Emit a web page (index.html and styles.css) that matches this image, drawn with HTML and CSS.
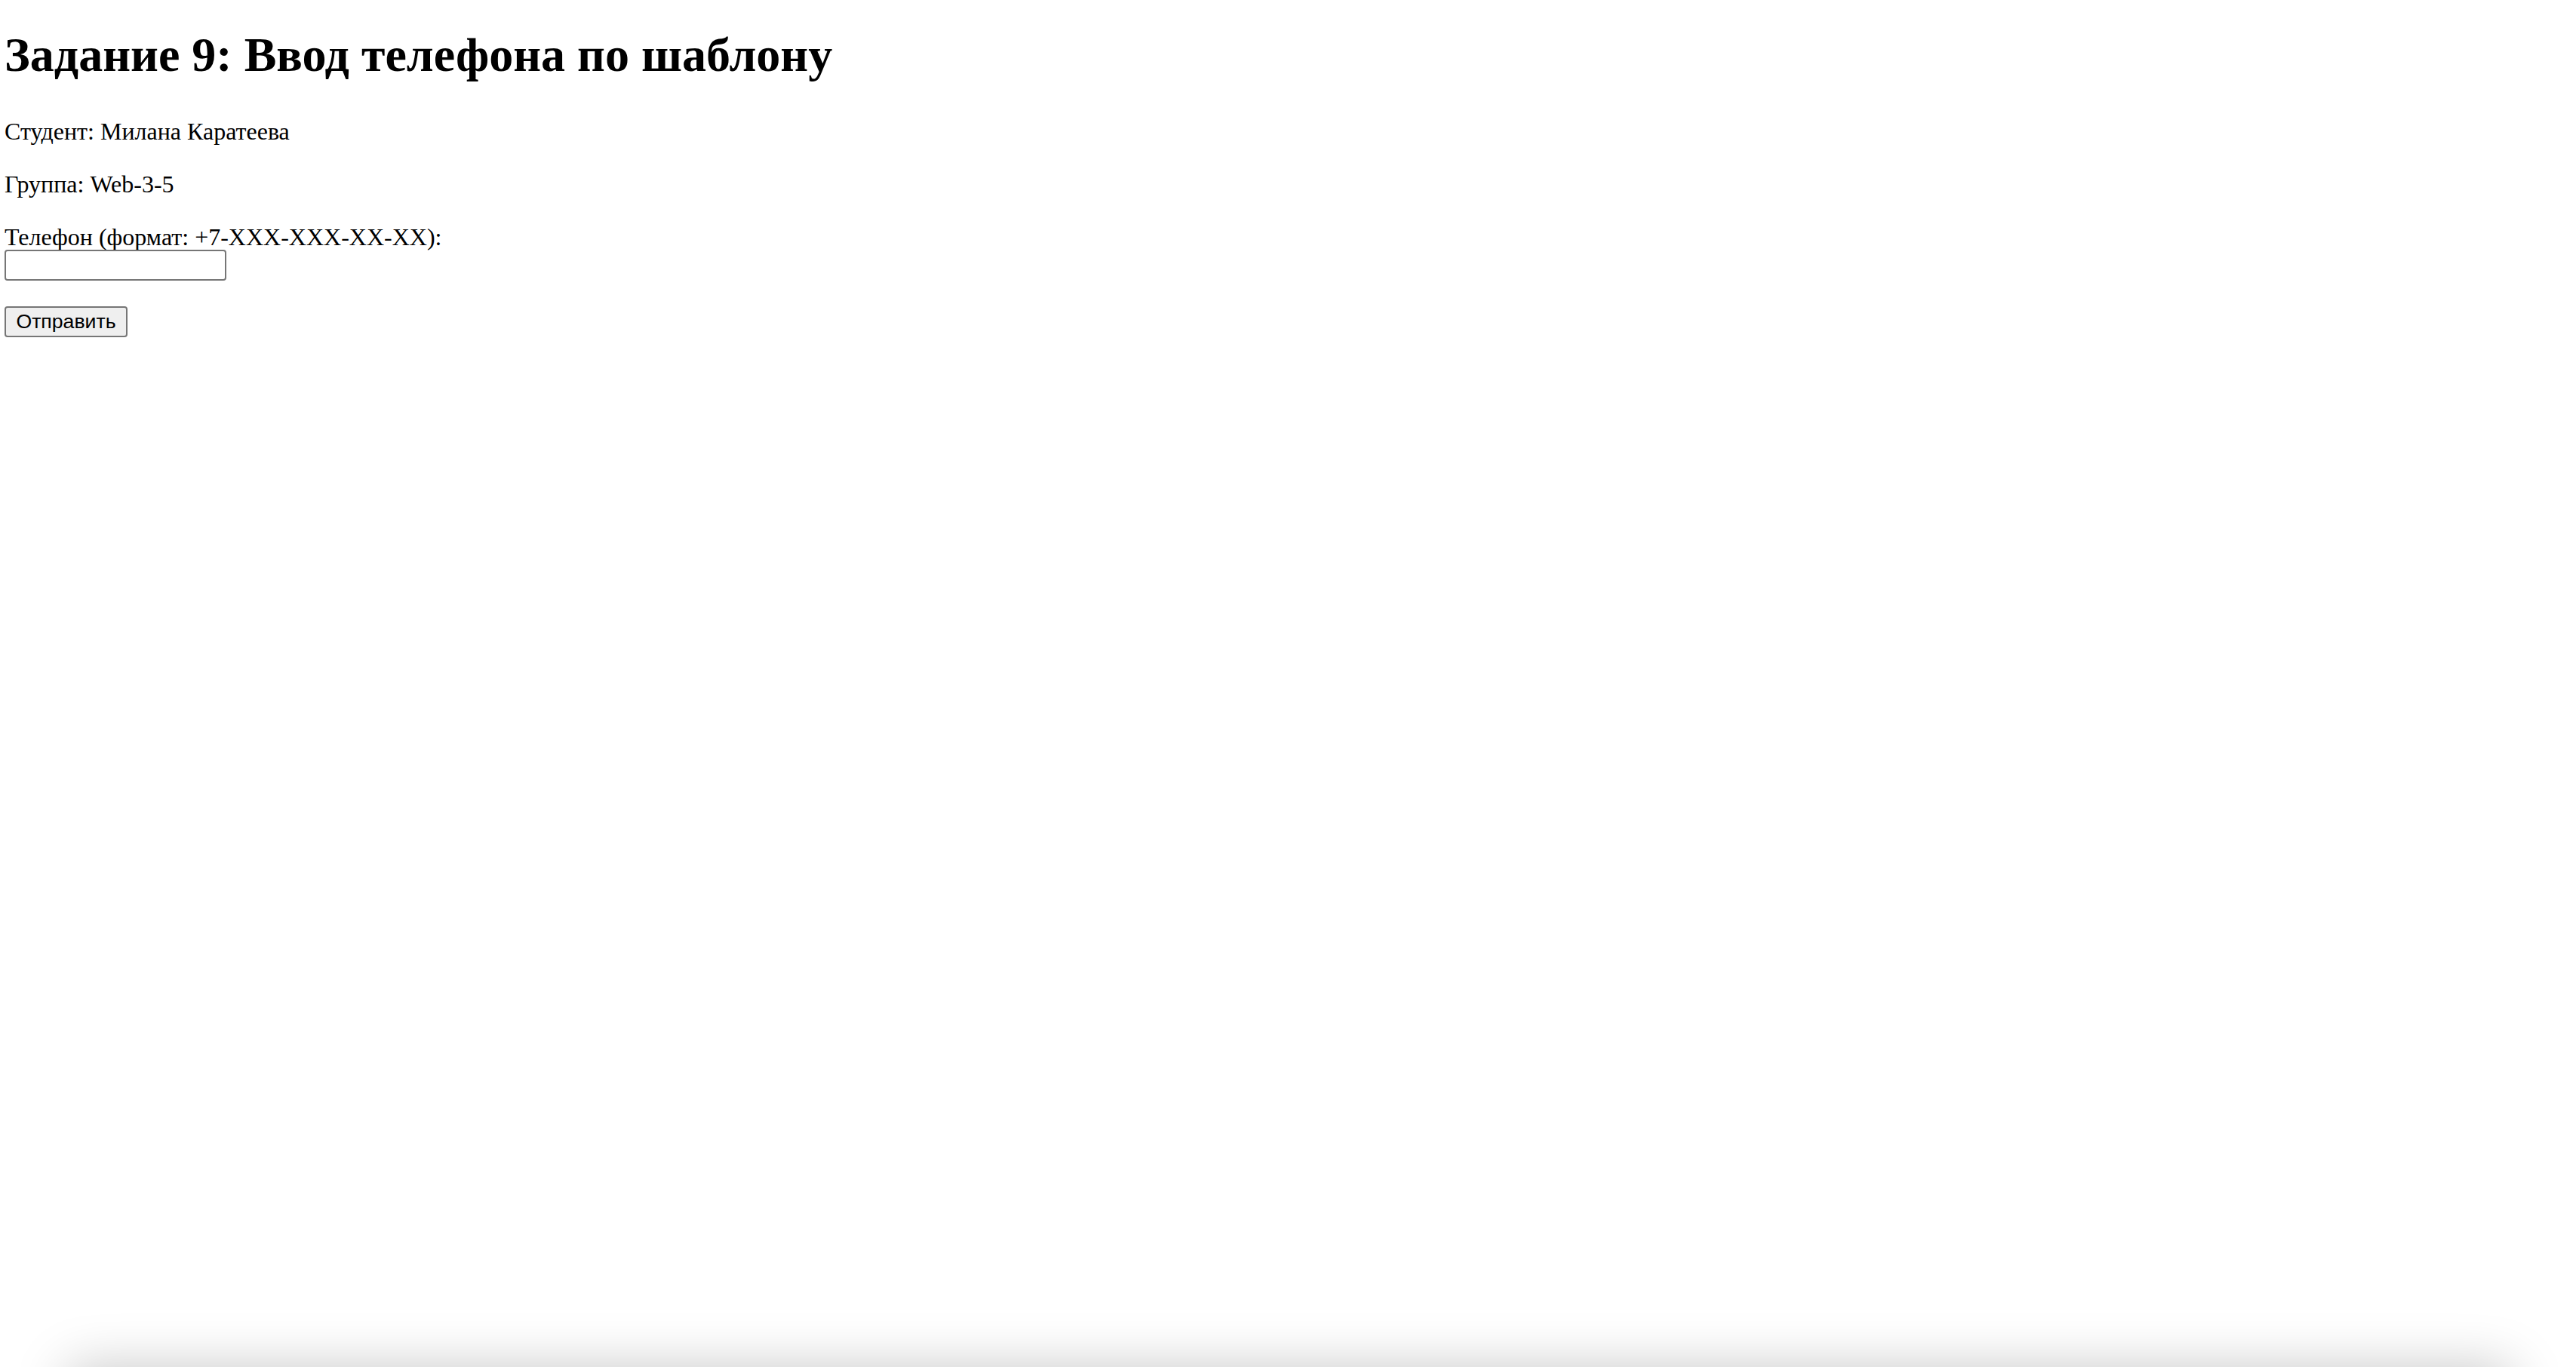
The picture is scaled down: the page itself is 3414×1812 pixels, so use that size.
FILE: index.html
```html
<!DOCTYPE html>
<html lang="ru">
<head>
<meta charset="utf-8">
<title>Задание 9: Ввод телефона по шаблону</title>
<link rel="stylesheet" href="styles.css">
</head>
<body>
<h1 class="title">Задание 9: Ввод телефона по шаблону</h1>
<p class="info info-first">Студент: Милана Каратеева</p>
<p class="info">Группа: Web-3-5</p>
<form class="form">
  <label class="label" for="phone">Телефон (формат: +7-XXX-XXX-XX-XX):</label>
  <input class="input" type="text" id="phone" name="phone">
  <button class="btn" type="submit">Отправить</button>
</form>
<div class="bottom-shadow"></div>
</body>
</html>
```

FILE: styles.css
```css
html, body {
  margin: 0;
  padding: 0;
  background: #ffffff;
}
body {
  padding-left: 6px;
  font-family: "Liberation Serif", "Times New Roman", serif;
  font-size: 32px;
  color: #000;
  overflow: hidden;
  height: 1812px;
  box-sizing: border-box;
}
.title {
  font-size: 64px;
  font-weight: bold;
  line-height: 74px;
  margin: 36px 0 0 0;
  padding-top: 0;
}
body > .title { margin-top: 0; padding-top: 36px; }
.info {
  margin: 32px 0 0 0;
  line-height: 38px;
}
.info-first { margin-top: 45px; }
.form {
  margin-top: 35px;
  display: flex;
  flex-direction: column;
  align-items: flex-start;
}
.label {
  display: block;
  line-height: 33px;
}
.input {
  width: 294px;
  height: 41px;
  box-sizing: border-box;
  border: 2px solid #767676;
  border-radius: 4px;
  padding: 2px 4px;
  margin: 0;
  background: #fff;
  font-family: "Liberation Sans", Arial, sans-serif;
  font-size: 26.67px;
}
.btn {
  margin-top: 34px;
  width: 163px;
  height: 41px;
  box-sizing: border-box;
  border: 2px solid #767676;
  border-radius: 4px;
  background: #efefef;
  color: #000;
  font-family: "Liberation Sans", Arial, sans-serif;
  font-size: 26.67px;
  padding: 0 12px;
}
.bottom-shadow {
  position: fixed;
  left: 90px;
  right: 86px;
  top: 1812px;
  height: 200px;
  box-shadow: 0 0 70px rgba(0, 0, 0, 0.22);
  background: #fff;
}
```
